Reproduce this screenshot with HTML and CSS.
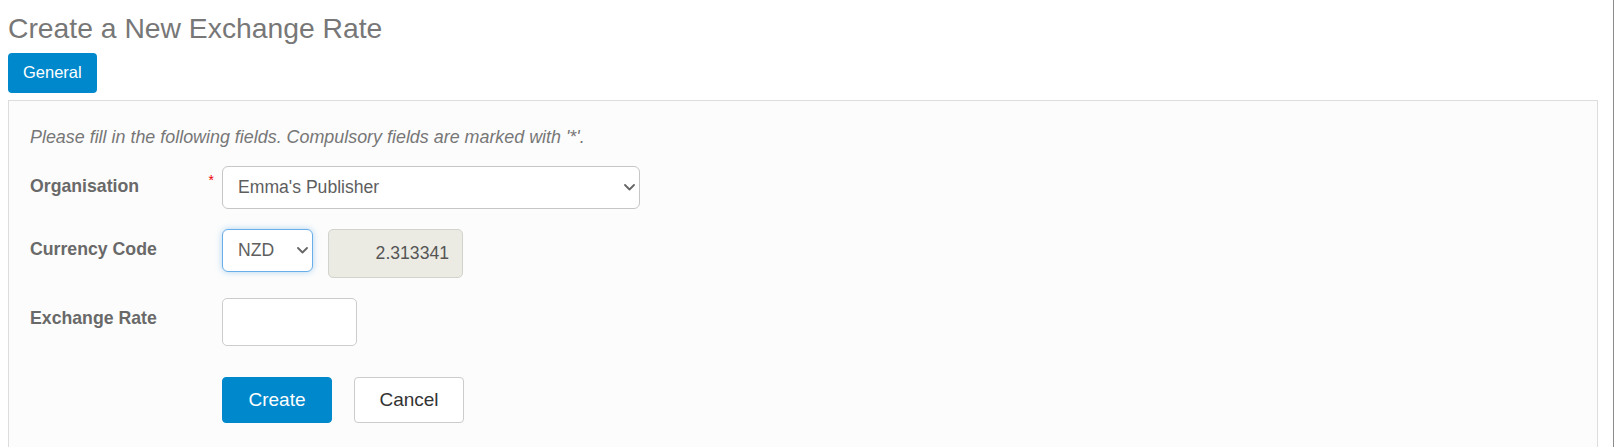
FILE: index.html
```html
<!DOCTYPE html>
<html lang="en">
<head>
<meta charset="utf-8">
<title>Create a New Exchange Rate</title>
<link rel="stylesheet" href="styles.css">
</head>
<body>
<div class="page">
  <h1 class="title">Create a New Exchange Rate</h1>
  <div class="tabs">
    <button class="tab tab-active" type="button">General</button>
  </div>
  <div class="panel">
    <p class="intro">Please fill in the following fields. Compulsory fields are marked with '*'.</p>
    <form class="form">
      <div class="row">
        <label class="label" for="org">Organisation<span class="req">*</span></label>
        <div class="select-wrap">
          <select id="org" class="select select-org">
            <option>Emma's Publisher</option>
          </select>
          <svg class="chev" viewBox="0 0 11 7" aria-hidden="true"><polyline points="1,1 5.5,5.5 10,1" fill="none" stroke="#666" stroke-width="1.8" stroke-linecap="round" stroke-linejoin="round"/></svg>
        </div>
      </div>
      <div class="row">
        <label class="label" for="cur">Currency Code</label>
        <div class="select-wrap">
          <select id="cur" class="select select-cur">
            <option>NZD</option>
          </select>
          <svg class="chev" viewBox="0 0 11 7" aria-hidden="true"><polyline points="1,1 5.5,5.5 10,1" fill="none" stroke="#666" stroke-width="1.8" stroke-linecap="round" stroke-linejoin="round"/></svg>
        </div>
        <input class="input input-readonly" type="text" value="2.313341" readonly>
      </div>
      <div class="row">
        <label class="label" for="rate">Exchange Rate</label>
        <input id="rate" class="input input-rate" type="text">
      </div>
      <div class="actions">
        <button class="btn btn-primary" type="button">Create</button>
        <button class="btn btn-default" type="button">Cancel</button>
      </div>
    </form>
  </div>
</div>
</body>
</html>
```

FILE: styles.css
```css
html, body {
  margin: 0;
  height: 100%;
  overflow: hidden;
}

body {
  font-family: "Liberation Sans", Arial, sans-serif;
  background: #fff;
}

.page {
  box-sizing: border-box;
  min-height: 100vh;
  padding: 12px 15px 0 8px;
  border-right: 1px solid #8c8c8c;
}

.title {
  margin: 0;
  font-size: 28.3px;
  line-height: 32px;
  font-weight: normal;
  color: #777;
}

.tabs {
  display: flex;
  margin-top: 9px;
}

.tab {
  box-sizing: border-box;
  height: 40px;
  padding: 9px 15px 11px;
  font-family: inherit;
  font-size: 16.5px;
  line-height: 20px;
  border: none;
  border-radius: 4px;
}

.tab-active {
  background: #0088cc;
  color: #fff;
}

.panel {
  margin-top: 7px;
  border: 1px solid #ddd;
  background: #fcfcfc;
  padding: 26px 21px 80px;
}

.intro {
  margin: 0 0 19px;
  font-style: italic;
  font-size: 17.9px;
  line-height: 20px;
  color: #777;
}

.form {
  display: flex;
  flex-direction: column;
  gap: 20px;
  margin: 0;
}

.row {
  display: flex;
  align-items: flex-start;
}

.label {
  box-sizing: border-box;
  width: 192px;
  display: flex;
  padding: 10px 8px 0 0;
  font-weight: bold;
  font-size: 17.7px;
  line-height: 20px;
  color: #696969;
}

.req {
  margin-left: auto;
  margin-top: -3px;
  color: #e00;
  font-size: 14px;
  line-height: 14px;
  font-weight: normal;
}

.select-wrap {
  position: relative;
}

.select {
  -webkit-appearance: none;
  appearance: none;
  box-sizing: border-box;
  height: 43px;
  border: 1px solid #c6c6c6;
  border-radius: 6px;
  background: #fff;
  font-family: inherit;
  font-size: 17.6px;
  color: #5e5e5e;
  padding: 0 28px 2px 15px;
  margin: 0;
  outline: none;
}

.select-org {
  width: 418px;
}

.select-cur {
  width: 91px;
  border-color: #6aaee9;
  box-shadow: 0 0 6px rgba(102, 175, 233, 0.5);
}

.chev {
  position: absolute;
  right: 5px;
  top: 50%;
  margin-top: -4px;
  width: 11px;
  height: 7px;
  pointer-events: none;
}

.input {
  box-sizing: border-box;
  width: 135px;
  border: 1px solid #ccc;
  border-radius: 5px;
  font-family: inherit;
  font-size: 17.6px;
  color: #555;
  margin: 0;
  outline: none;
}

.input-readonly {
  margin-left: 15px;
  height: 49px;
  background: #ebebe4;
  border-color: #d3d3cd;
  text-align: right;
  padding: 0 13px 0 12px;
}

.input-rate {
  height: 48px;
  background: #fff;
  padding: 0 12px;
}

.actions {
  display: flex;
  gap: 22px;
  margin: 11px 0 0 192px;
}

.btn {
  box-sizing: border-box;
  width: 110px;
  height: 46px;
  padding: 11px 0 13px;
  font-family: inherit;
  font-size: 19px;
  line-height: 22px;
  border: 1px solid;
  border-radius: 4px;
}

.btn-primary {
  background: #0088cc;
  border-color: #0088cc;
  color: #fff;
}

.btn-default {
  background: #fff;
  border-color: #ccc;
  color: #333;
}
```
